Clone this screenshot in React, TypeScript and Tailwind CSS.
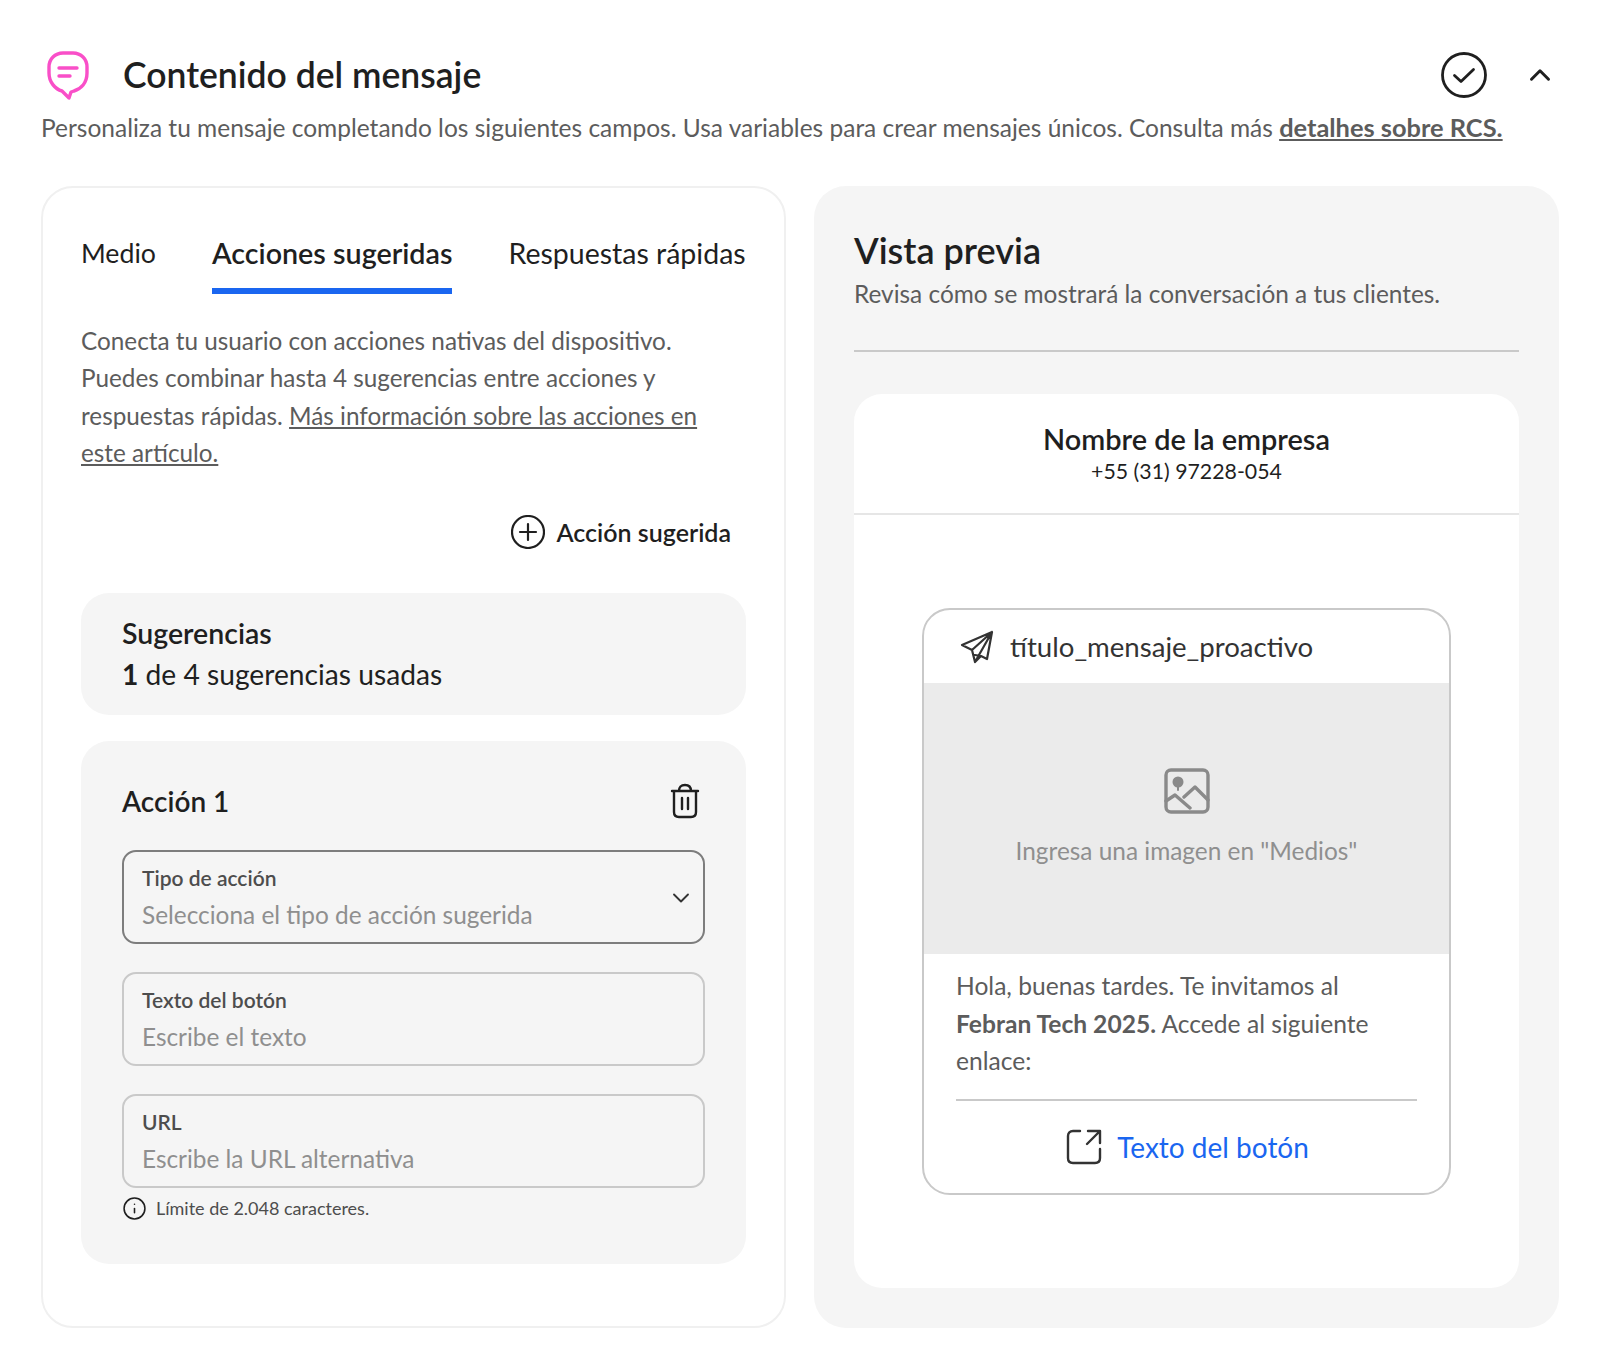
import { ChevronDown, ChevronUp, Info } from 'lucide-react';

function MessageIcon() {
  return (
    <svg width="42" height="49" viewBox="0 0 42 49" fill="none" stroke="#f94fc8" strokeWidth="3.4" strokeLinecap="round" strokeLinejoin="round">
      <path d="M16 2h10c8 0 14 6 14 14v6c0 10-6 16-13 18l-3 1-2 6-7-7C8 38 2 31 2 22v-6C2 8 8 2 16 2z" />
      <path d="M12 17h18M12 25h11" />
    </svg>
  );
}

function CheckCircle() {
  return (
    <svg width="46" height="46" viewBox="0 0 46 46" fill="none" stroke="#1f1f1f" strokeWidth="2.8" strokeLinecap="round" strokeLinejoin="round">
      <circle cx="23" cy="23" r="21.5" />
      <path d="M13.5 23.5l6.5 6 12.5-12" />
    </svg>
  );
}

function PlusCircle() {
  return (
    <svg width="34" height="34" viewBox="0 0 34 34" fill="none" stroke="#1f1f1f" strokeWidth="2.2" strokeLinecap="round">
      <circle cx="17" cy="17" r="16" />
      <path d="M17 9v16M9 17h16" />
    </svg>
  );
}

function TrashIcon() {
  return (
    <svg width="30" height="36" viewBox="0 0 30 36" fill="none" stroke="#1f1f1f" strokeWidth="2.4" strokeLinecap="round" strokeLinejoin="round">
      <path d="M2 8h26M4 8v21c0 3 2 5 5 5h12c3 0 5-2 5-5V8M9 8c0-4 2-6 6-6s6 2 6 6" />
      <path d="M12 15v11M18 15v11" />
    </svg>
  );
}

function PlaneIcon() {
  return (
    <svg width="34" height="34" viewBox="0 0 34 34" fill="none" stroke="#333" strokeWidth="2.2" strokeLinecap="round" strokeLinejoin="round">
      <path d="M32 2L2 15l10 5 3 12 6-6 6 3zM32 2L12 20M32 2L15 32M15 25l6 1" />
    </svg>
  );
}

function ImageIcon() {
  return (
    <svg width="46" height="46" viewBox="0 0 46 46" fill="none" stroke="#8a8a8a" strokeWidth="3.4" strokeLinecap="round" strokeLinejoin="round">
      <rect x="2" y="2" width="42" height="42" rx="5" />
      <path d="M2 33l9-6 15 13M20 29l11-10 13 13" />
      <circle cx="14" cy="14" r="5.5" fill="#8a8a8a" stroke="none" />
      <path d="M14 19v3" strokeWidth="2" />
    </svg>
  );
}

function ExternalIcon() {
  return (
    <svg width="36" height="36" viewBox="0 0 36 36" fill="none" stroke="#333" strokeWidth="2.4" strokeLinecap="round" strokeLinejoin="round">
      <path d="M14 2H7C4 2 2 4 2 7v22c0 3 2 5 5 5h22c3 0 5-2 5-5v-9" />
      <path d="M22 2h12v12M34 2L21 15" />
    </svg>
  );
}

function Field({ label, placeholder, dark, select }: { label: string; placeholder: string; dark?: boolean; select?: boolean }) {
  return (
    <div className={`relative h-[94px] rounded-[14px] border-2 px-[18px] pt-[13px] ${dark ? 'border-[#7d7d7d]' : 'border-[#c9c9c9]'}`}>
      <p className="text-[21px] leading-[26px] font-semibold text-[#4d4d4d]">{label}</p>
      <p className="mt-[10px] text-[24.4px] leading-[28px] text-[#8f8f8f]">{placeholder}</p>
      {select && <ChevronDown className="absolute right-[8px] top-[32px] text-[#333]" size={28} strokeWidth={1.6} />}
    </div>
  );
}

export default function App() {
  return (
    <div className="min-h-[1369px] bg-white pl-[41px] pr-[41px] pt-[49px] font-['Lato','Noto_Sans',sans-serif] text-[#1f1f1f]">
      <div className="flex items-center">
        <div className="ml-[6px] w-[76px] pt-[2px]"><MessageIcon /></div>
        <h1 className="text-[35.5px] leading-[46px] font-semibold">Contenido del mensaje</h1>
        <div className="ml-auto flex items-center gap-[36px] pr-[2px]">
          <CheckCircle />
          <ChevronUp size={34} strokeWidth={2.1} />
        </div>
      </div>
      <p className="mt-[10px] text-[24.5px] leading-[34px] text-[#5c5c5c]">
        Personaliza tu mensaje completando los siguientes campos. Usa variables para crear mensajes únicos. Consulta más{' '}
        <span className="text-[25.4px] font-bold underline">detalhes sobre RCS.</span>
      </p>

      <div className="mt-[41px] grid grid-cols-[745px_745px] gap-[28px]">
        <section className="h-[1142px] rounded-[32px] border-2 border-[#f0f0f0] px-[38px] pt-[45px]">
          <div className="flex items-start gap-[56px] text-[28.5px] leading-[40px]">
            <span className="text-[26.7px]">Medio</span>
            <span className="border-b-[6px] border-[#1a66f0] pb-[15px] text-[28.7px] font-semibold">Acciones sugeridas</span>
            <span>Respuestas rápidas</span>
          </div>
          <p className="mt-[28px] text-[24.3px] leading-[37.3px] text-[#5c5c5c]">
            Conecta tu usuario con acciones nativas del dispositivo.<br />
            Puedes combinar hasta 4 sugerencias entre acciones y<br />
            respuestas rápidas. <span className="underline">Más información sobre las acciones en<br />este artículo.</span>
          </p>
          <div className="mt-[44px] flex items-center justify-end gap-[11px] pr-[15px]">
            <PlusCircle />
            <span className="text-[25px] leading-[34px] font-semibold">Acción sugerida</span>
          </div>
          <div className="mt-[44px] h-[122px] rounded-[28px] bg-[#f5f5f5] px-[41px] pt-[20px]">
            <p className="text-[28.5px] leading-[40px] font-semibold">Sugerencias</p>
            <p className="text-[28.2px] leading-[42px]"><b className="font-bold">1</b> de 4 sugerencias usadas</p>
          </div>
          <div className="mt-[26px] h-[523px] rounded-[28px] bg-[#f5f5f5] px-[41px] pt-[42px]">
            <div className="flex items-center justify-between pr-[5px]">
              <p className="text-[28px] leading-[36px] font-semibold">Acción 1</p>
              <TrashIcon />
            </div>
            <div className="mt-[31px] flex flex-col gap-[28px]">
              <Field label="Tipo de acción" placeholder="Selecciona el tipo de acción sugerida" dark select />
              <Field label="Texto del botón" placeholder="Escribe el texto" />
              <Field label="URL" placeholder="Escribe la URL alternativa" />
            </div>
            <div className="mt-[7px] flex items-center gap-[9px] text-[18px] leading-[26px] text-[#4d4d4d]">
              <Info size={25} strokeWidth={1.5} className="text-[#1f1f1f]" />
              <span>Límite de 2.048 caracteres.</span>
            </div>
          </div>
        </section>

        <section className="h-[1142px] rounded-[32px] bg-[#f5f5f5] px-[40px] pt-[42px]">
          <h2 className="text-[36px] leading-[44px] font-semibold">Vista previa</h2>
          <p className="mt-[5px] text-[24.4px] leading-[34px] text-[#5c5c5c]">Revisa cómo se mostrará la conversación a tus clientes.</p>
          <div className="mt-[39px] h-[2px] bg-[#c9c9c9]" />
          <div className="mt-[42px] h-[894px] rounded-[28px] bg-white">
            <div className="h-[121px] border-b-2 border-[#e6e6e6] pt-[27px] text-center">
              <p className="text-[28.9px] leading-[36px] font-semibold">Nombre de la empresa</p>
              <p className="mt-[1px] text-[21.3px] leading-[26px]">+55 (31) 97228-054</p>
            </div>
            <div className="px-[68px] pt-[93px]">
              <div className="overflow-hidden rounded-[28px] border-2 border-[#c9c9c9]">
                <div className="flex h-[73px] items-center gap-[16px] pl-[36px]">
                  <PlaneIcon />
                  <span className="text-[27.6px] text-[#333]">título_mensaje_proactivo</span>
                </div>
                <div className="flex h-[271px] flex-col items-center bg-[#ebebeb] pt-[85px]">
                  <ImageIcon />
                  <p className="mt-[20px] text-[24.4px] leading-[34px] text-[#8f8f8f]">Ingresa una imagen en "Medios"</p>
                </div>
                <div className="px-[32px] pt-[13px]">
                  <p className="text-[24.6px] leading-[37.5px] text-[#5c5c5c]">
                    Hola, buenas tardes. Te invitamos al<br />
                    <b className="font-bold">Febran Tech 2025.</b> Accede al siguiente<br />
                    enlace:
                  </p>
                  <div className="mt-[19px] h-[2px] bg-[#c9c9c9]" />
                  <div className="flex h-[92px] items-center justify-center gap-[15px] pl-[2px]">
                    <ExternalIcon />
                    <span className="text-[28px] text-[#1a66f0]">Texto del botón</span>
                  </div>
                </div>
              </div>
            </div>
          </div>
        </section>
      </div>
    </div>
  );
}
